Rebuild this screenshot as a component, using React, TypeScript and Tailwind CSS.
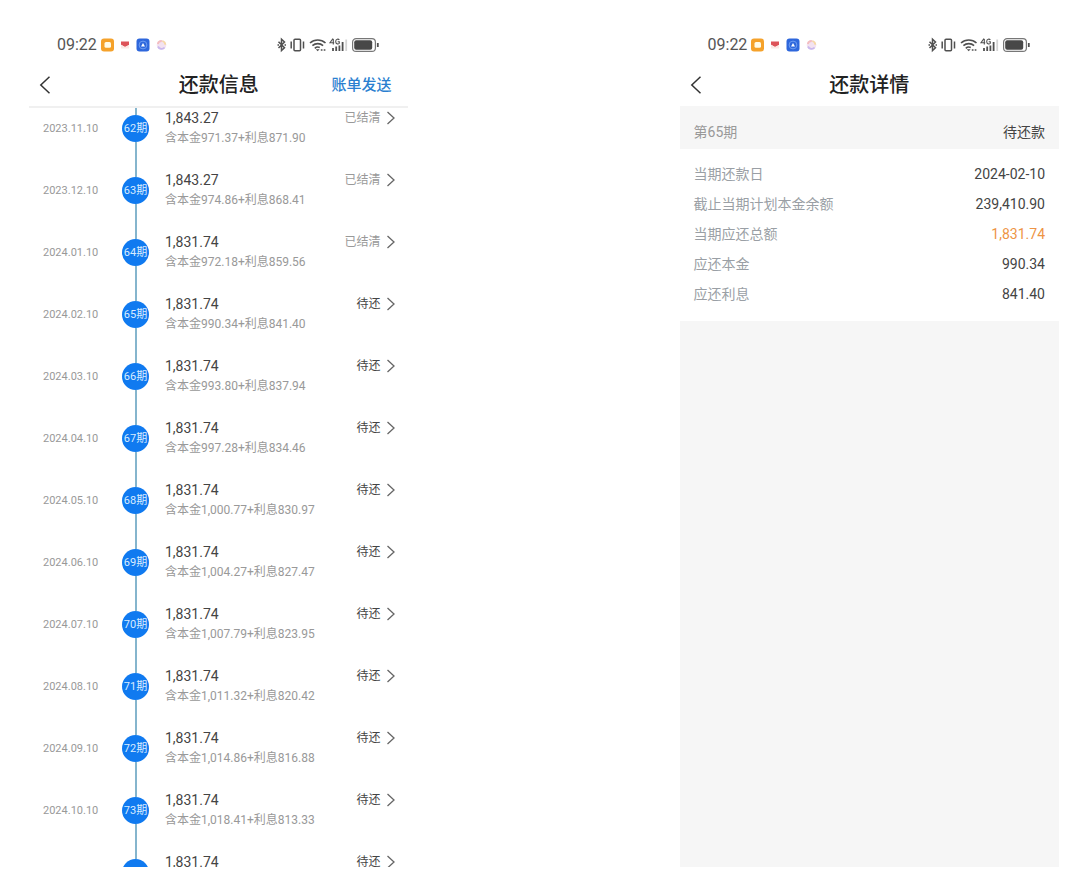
import { ReactNode } from "react";

type Installment = {
  date?: string;
  period?: number;
  amount: string;
  principal?: string;
  interest?: string;
  settled?: boolean;
};

const installments: Installment[] = [
  { date: "2023.11.10", period: 62, amount: "1,843.27", principal: "971.37", interest: "871.90", settled: true },
  { date: "2023.12.10", period: 63, amount: "1,843.27", principal: "974.86", interest: "868.41", settled: true },
  { date: "2024.01.10", period: 64, amount: "1,831.74", principal: "972.18", interest: "859.56", settled: true },
  { date: "2024.02.10", period: 65, amount: "1,831.74", principal: "990.34", interest: "841.40" },
  { date: "2024.03.10", period: 66, amount: "1,831.74", principal: "993.80", interest: "837.94" },
  { date: "2024.04.10", period: 67, amount: "1,831.74", principal: "997.28", interest: "834.46" },
  { date: "2024.05.10", period: 68, amount: "1,831.74", principal: "1,000.77", interest: "830.97" },
  { date: "2024.06.10", period: 69, amount: "1,831.74", principal: "1,004.27", interest: "827.47" },
  { date: "2024.07.10", period: 70, amount: "1,831.74", principal: "1,007.79", interest: "823.95" },
  { date: "2024.08.10", period: 71, amount: "1,831.74", principal: "1,011.32", interest: "820.42" },
  { date: "2024.09.10", period: 72, amount: "1,831.74", principal: "1,014.86", interest: "816.88" },
  { date: "2024.10.10", period: 73, amount: "1,831.74", principal: "1,018.41", interest: "813.33" },
  // next one peeks in at the bottom edge
  { amount: "1,831.74" },
];

const details = [
  { label: "当期还款日", value: "2024-02-10" },
  { label: "截止当期计划本金余额", value: "239,410.90" },
  { label: "当期应还总额", value: "1,831.74", highlight: true },
  { label: "应还本金", value: "990.34" },
  { label: "应还利息", value: "841.40" },
];

function AppIcons() {
  return (
    <svg width="67" height="14" viewBox="0 0 67 14" fill="none" aria-hidden="true">
      <rect x="0" y="0.5" width="13" height="13" rx="3" fill="#f5a22b" />
      <rect x="3.500" y="4" width="6.5" height="5.8" rx="1.5" fill="#fffbe8" />
      <path d="M20 3.500h8v3.500l-4 2-4-2.200z" fill="#dd5359" />
      <path d="M20 6.800l4 2.200 4-2V10.500h-8z" fill="#fbe9e6" />
      <rect x="35.500" y="0.5" width="13" height="13" rx="3" fill="#2e67dc" />
      <circle cx="42" cy="7" r="3.900" stroke="#6d9cf2" strokeWidth="1" />
      <path d="M42 5l2 3.600h-4z" fill="#fff" />
      <circle cx="60.500" cy="7" r="4.800" fill="#f3e2f0" />
      <path d="M56.800 6a4 4 0 0 1 4-3" stroke="#f4bdc0" strokeWidth="1.800" />
      <path d="M61.300 3a4 4 0 0 1 3 3.800" stroke="#f6d9a4" strokeWidth="1.800" />
      <path d="M57 8.500a4 4 0 0 0 6.600 1" stroke="#c9b8ee" strokeWidth="1.800" />
    </svg>
  );
}

function SystemIcons() {
  return (
    <svg width="103" height="16" viewBox="0 0 103 16" fill="none" stroke="#505050" aria-hidden="true">
      <path d="M1.500 4.800l6 6L4.500 13.500V2.300l3 2.700-6 6" strokeWidth="1.500" />
      <path d="M0.500 8H2M7.500 8H9" strokeWidth="1.500" />

      <rect x="17" y="2.300" width="6.500" height="11.400" rx="1" strokeWidth="1.500" />
      <path d="M14.200 4.500v7M26.500 4.500v7" strokeWidth="1.500" />

      <path d="M33 6a11.500 11.500 0 0 1 15.500 0M35.400 8.700a8 8 0 0 1 10.700 0M37.800 11.300a4.600 4.600 0 0 1 5-.8" strokeWidth="1.600" />
      <path d="M38.800 12.200h3.800l-1.900 2z" fill="#505050" stroke="none" />
      <path d="M43.800 13h1.700M46.700 13h1.700" strokeWidth="1.500" />

      <path d="M56 1.500L53 5.800h4.200M56.300 2v5.500M62.300 3c-.8-1.300-3.600-1.200-3.600 1.600s2.800 2.800 3.600 1.600V4.800h-1.600" strokeWidth="1.100" />
      <path d="M56 11v3M59.200 9.500V14M62.400 8.500V14M65.600 5v9" strokeWidth="1.800" />
      <path d="M69.200 2.500V14" stroke="#d4d4d4" strokeWidth="1.800" />

      <rect x="75.600" y="1.600" width="22.800" height="12.800" rx="3.500" stroke="#777" strokeWidth="1.200" />
      <rect x="77.200" y="3.200" width="18" height="9.600" rx="2" fill="#484848" stroke="none" />
      <path d="M100.800 6v4" strokeWidth="1.800" />
    </svg>
  );
}

function ScreenHeader({ title, action }: { title: string; action?: ReactNode }) {
  return (
    <header className="shrink-0 pt-[26px]">
      <div className="flex h-[38px] items-center justify-between pl-7 pr-7">
        <div className="flex items-center gap-1">
          <span className="text-base leading-5 text-[#555]">09:22</span>
          <AppIcons />
        </div>
        <SystemIcons />
      </div>
      <div className="grid h-[42px] grid-cols-[1fr_auto_1fr] items-center">
        <button aria-label="返回" className="pl-[10px]">
          <svg width="12" height="18" viewBox="0 0 12 18" fill="none" stroke="#333" strokeWidth="1.500">
            <path d="M10.500 0.800L1.800 9l8.700 8.200" />
          </svg>
        </button>
        <h1 className="text-xl leading-7 font-medium text-[#222]">{title}</h1>
        <div className="flex justify-end pr-[17px]">{action}</div>
      </div>
    </header>
  );
}

function InstallmentRow({ item }: { item: Installment }) {
  return (
    <li className="flex h-[62px] shrink-0 items-start">
      <div className="w-[93px] shrink-0 pl-[14px] text-[11px] leading-[42px] text-[#999]">
        {item.date && <time>{item.date}</time>}
      </div>
      <div className="flex h-full w-[27px] shrink-0 flex-col items-center">
        <div className="h-[7px] w-[2px] bg-[#85b5cd]" />
        <div className="flex size-[27px] items-center justify-center rounded-full bg-[#107af0] text-[11px] leading-4 whitespace-nowrap text-[#d9ecff]">
          {item.period && `${item.period}期`}
        </div>
        <div className="w-[2px] flex-1 bg-[#85b5cd]" />
      </div>
      <div className="flex-1 pl-4 whitespace-nowrap">
        <div className="text-sm leading-5 text-[#444]">{item.amount}</div>
        {item.principal && (
          <div className="text-xs leading-5 text-[#999]">
            含本金{item.principal}+利息{item.interest}
          </div>
        )}
      </div>
      <button className={`flex h-5 items-center gap-[6px] pr-3 text-xs ${item.settled ? "text-[#999]" : "text-[#444]"}`}>
        {item.settled ? "已结清" : "待还"}
        <svg width="10" height="14" viewBox="0 0 10 14" fill="none" stroke="#666" strokeWidth="1.300" aria-hidden="true">
          <path d="M1.500 1l6.500 6-6.500 6" />
        </svg>
      </button>
    </li>
  );
}

export default function App() {
  return (
    <main className="grid h-screen grid-cols-[7fr_5fr_7fr] bg-white pr-[21px] pb-[26px] pl-[29px] font-['Roboto','Noto_Sans_CJK_SC',sans-serif]">
      <section className="flex min-h-0 flex-col overflow-hidden">
        <ScreenHeader
          title="还款信息"
          action={<button className="text-[15px] leading-6 font-medium text-[#2b7fd0]">账单发送</button>}
        />
        <ol className="flex min-h-0 flex-1 flex-col overflow-hidden border-t-2 border-[#f0f0f0]">
          {installments.map((item, i) => (
            <InstallmentRow key={i} item={item} />
          ))}
        </ol>
      </section>

      <section className="col-start-3 flex min-h-0 flex-col overflow-hidden bg-white">
        <ScreenHeader title="还款详情" />
        <div className="flex h-[43px] shrink-0 items-center justify-between bg-[#f6f6f6] px-[14px] pt-2 text-sm">
          <span className="text-[#999]">第65期</span>
          <span className="text-[#444]">待还款</span>
        </div>
        <dl className="shrink-0 px-[14px] pt-[10px] pb-3 text-sm leading-[30px]">
          {details.map((d) => (
            <div key={d.label} className="flex justify-between">
              <dt className="text-[#9a9fa5]">{d.label}</dt>
              <dd className={d.highlight ? "text-[#ee9445]" : "text-[#444]"}>{d.value}</dd>
            </div>
          ))}
        </dl>
        <div className="flex-1 bg-[#f6f6f6]" />
      </section>
    </main>
  );
}
